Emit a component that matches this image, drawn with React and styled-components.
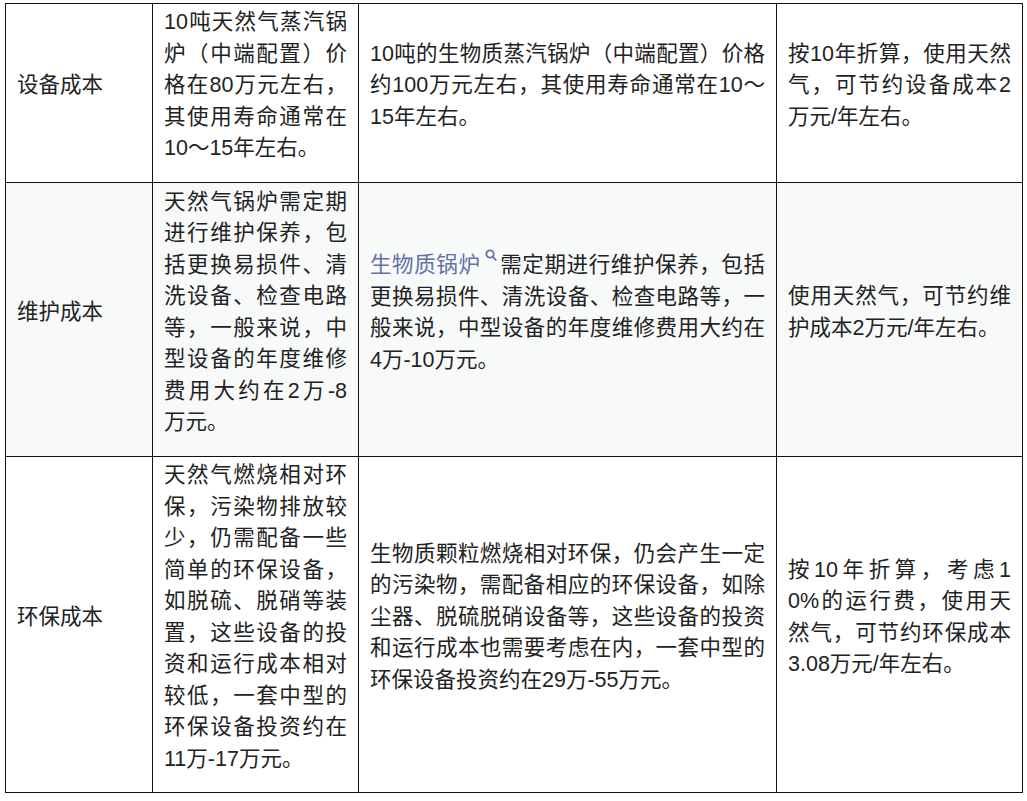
import React from "react";
import styled, { createGlobalStyle } from "styled-components";

const GlobalStyle = createGlobalStyle`
  html, body {
    margin: 0;
    padding: 0;
    background: #ffffff;
  }
  body {
    font-family: "Liberation Sans", "Noto Sans CJK SC", sans-serif;
    color: #222222;
  }
`;

const Page = styled.div`
  padding: 3px 0 0 5px;
`;

const Table = styled.table`
  border-collapse: collapse;
  table-layout: fixed;
  width: 1017px;
`;

const Row = styled.tr`
  height: ${(p) => p.$height}px;
  background: ${(p) => (p.$shaded ? "#f8fafa" : "#ffffff")};
`;

const Cell = styled.td`
  border: 1px solid #111111;
  padding: 2px 11px 2px;
  vertical-align: middle;
  font-size: 21.5px;
  line-height: 31.5px;
`;

const Para = styled.p`
  margin: 0 0 14px;
`;

const Line = styled.span`
  display: block;
  text-align: justify;
  text-align-last: ${(p) => (p.$last ? "left" : "justify")};
`;

const Link = styled.span`
  color: #6470a8;
`;

const SearchMark = styled.svg`
  width: 12px;
  height: 12px;
  vertical-align: 11px;
  margin: 0 3px 0 4px;
`;

const rows = [
  {
    height: 179,
    cells: [
      ["设备成本"],
      ["10吨天然气蒸汽锅", "炉（中端配置）价", "格在80万元左右，", "其使用寿命通常在", "10～15年左右。"],
      ["10吨的生物质蒸汽锅炉（中端配置）价格", "约100万元左右，其使用寿命通常在10～", "15年左右。"],
      ["按10年折算，使用天然", "气，可节约设备成本2", "万元/年左右。"],
    ],
  },
  {
    height: 274,
    shaded: true,
    cells: [
      ["维护成本"],
      ["天然气锅炉需定期", "进行维护保养，包", "括更换易损件、清", "洗设备、检查电路", "等，一般来说，中", "型设备的年度维修", "费用大约在2万-8", "万元。"],
      ["@link需定期进行维护保养，包括", "更换易损件、清洗设备、检查电路等，一", "般来说，中型设备的年度维修费用大约在", "4万-10万元。"],
      ["使用天然气，可节约维", "护成本2万元/年左右。"],
    ],
  },
  {
    height: 336,
    cells: [
      ["环保成本"],
      ["天然气燃烧相对环", "保，污染物排放较", "少，仍需配备一些", "简单的环保设备，", "如脱硫、脱硝等装", "置，这些设备的投", "资和运行成本相对", "较低，一套中型的", "环保设备投资约在", "11万-17万元。"],
      ["生物质颗粒燃烧相对环保，仍会产生一定", "的污染物，需配备相应的环保设备，如除", "尘器、脱硫脱硝设备等，这些设备的投资", "和运行成本也需要考虑在内，一套中型的", "环保设备投资约在29万-55万元。"],
      ["按10年折算，考虑1", "0%的运行费，使用天", "然气，可节约环保成本", "3.08万元/年左右。"],
    ],
  },
];

function Search() {
  return (
    <SearchMark viewBox="0 0 12 12" fill="none" stroke="#6470a8" strokeWidth="1.8">
      <circle cx="5" cy="5" r="3.7" />
      <line x1="7.8" y1="7.8" x2="10.8" y2="10.8" strokeLinecap="round" />
    </SearchMark>
  );
}

function renderLine(text) {
  if (text.startsWith("@link")) {
    return (
      <>
        <Link>生物质锅炉</Link>
        <Search />
        {text.slice(5)}
      </>
    );
  }
  return text;
}

export default function App() {
  return (
    <Page>
      <GlobalStyle />
      <Table>
        <colgroup>
          <col style={{ width: 147 }} />
          <col style={{ width: 206 }} />
          <col style={{ width: 418 }} />
          <col style={{ width: 246 }} />
        </colgroup>
        <tbody>
          {rows.map((row, i) => (
            <Row key={i} $height={row.height} $shaded={row.shaded}>
              {row.cells.map((lines, j) => (
                <Cell key={j}>
                  <Para>
                    {lines.map((t, k) => (
                      <Line key={k} $last={k === lines.length - 1}>
                        {renderLine(t)}
                      </Line>
                    ))}
                  </Para>
                </Cell>
              ))}
            </Row>
          ))}
        </tbody>
      </Table>
    </Page>
  );
}
